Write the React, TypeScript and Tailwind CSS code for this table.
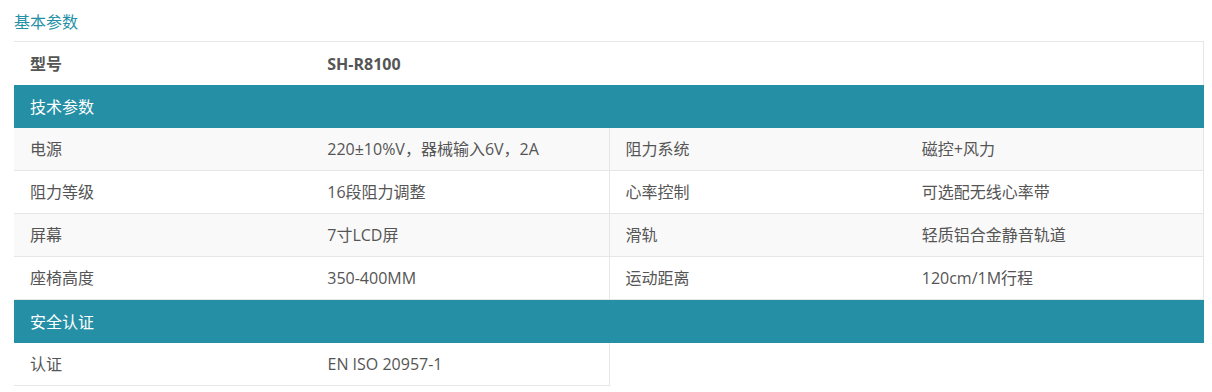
const rows: [string, string, string, string][] = [
  ['电源', '220±10%V，器械输入6V，2A', '阻力系统', '磁控+风力'],
  ['阻力等级', '16段阻力调整', '心率控制', '可选配无线心率带'],
  ['屏幕', '7寸LCD屏', '滑轨', '轻质铝合金静音轨道'],
  ['座椅高度', '350-400MM', '运动距离', '120cm/1M行程'],
]

function SectionHeader({ title }: { title: string }) {
  return (
    <div className="flex h-[43px] items-center bg-[#258fa5] pl-4 text-white">{title}</div>
  )
}

export default function App() {
  return (
    <div
      className="min-h-screen bg-white pl-[14px] pt-[10px] text-[16px] text-[#555]"
      style={{ fontFamily: '"Open Sans", "Noto Sans CJK SC", sans-serif' }}
    >
      <h3 className="mb-[7px] text-[16px] font-normal leading-6 text-[#2590a6]">基本参数</h3>

      <div className="w-[1190px] border-t border-[#e6e6e6]">
        <div className="grid h-[43px] grid-cols-4 items-center border-r border-[#e6e6e6] bg-white font-bold">
          <div className="pl-4">型号</div>
          <div className="col-span-3 pl-4">SH-R8100</div>
        </div>

        <SectionHeader title="技术参数" />

        {rows.map(([a, b, c, d], i) => (
          <div
            key={a}
            className={`grid h-[43px] grid-cols-4 border-b border-r border-[#e6e6e6] ${
              i % 2 === 0 ? 'bg-[#f9f9f9]' : 'bg-white'
            }`}
          >
            <div className="flex items-center pl-4">{a}</div>
            <div className="flex items-center pl-4">{b}</div>
            <div className="flex items-center border-l border-[#e6e6e6] pl-4">{c}</div>
            <div className="flex items-center pl-4">{d}</div>
          </div>
        ))}

        <SectionHeader title="安全认证" />

        <div className="grid h-[43px] w-[596px] grid-cols-2 border-b border-r border-[#e6e6e6] bg-white">
          <div className="flex items-center pl-4">认证</div>
          <div className="flex items-center pl-4">EN ISO 20957-1</div>
        </div>
      </div>
    </div>
  )
}
